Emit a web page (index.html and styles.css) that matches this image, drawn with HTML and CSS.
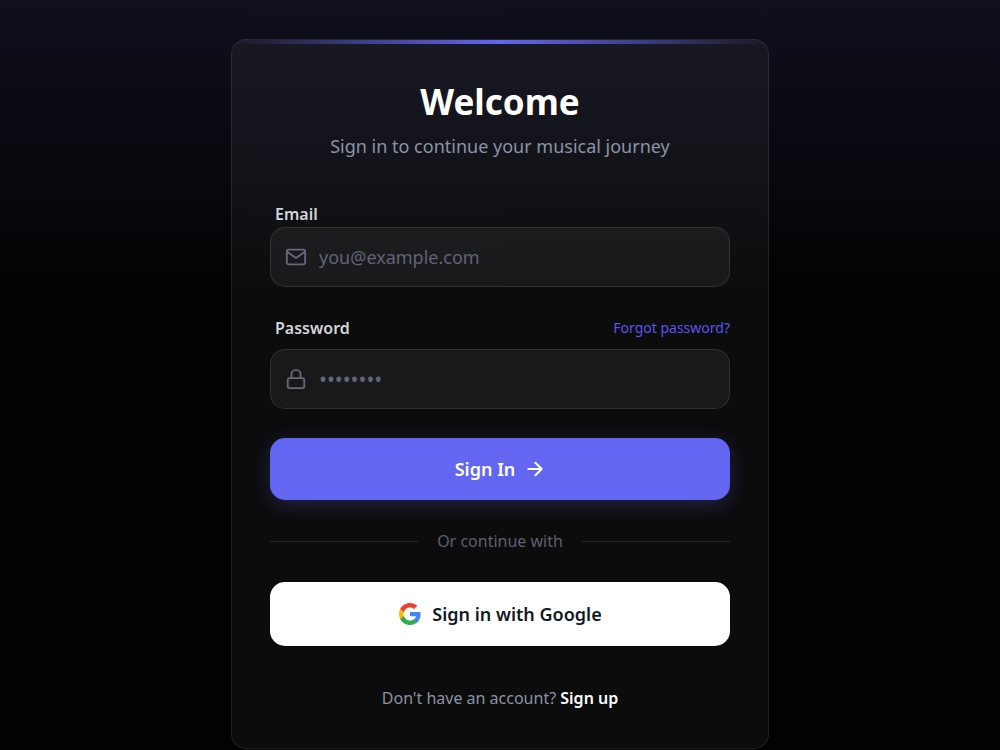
FILE: index.html
```
<!DOCTYPE html>
<html lang="en">
<head>
    <meta charset="UTF-8">
    <meta name="viewport" content="width=device-width, initial-scale=1.0">
    <title>Sign In</title>
    <link rel="stylesheet" href="styles.css">
</head>
<body>
    <main class="auth-card">
        <header class="auth-header">
            <h1>Welcome</h1>
            <p>Sign in to continue your musical journey</p>
        </header>

        <form class="auth-form">
            <div class="form-group">
                <label for="email">Email</label>
                <div class="input-wrapper">
                    <svg class="input-icon" viewBox="0 0 24 24" aria-hidden="true">
                        <rect x="2" y="4" width="20" height="16" rx="2"/>
                        <path d="M2.500 6.500 12 13l9.500-6.500"/>
                    </svg>
                    <input type="email" id="email" placeholder="you@example.com">
                </div>
            </div>

            <div class="form-group form-group-password">
                <div class="label-row">
                    <label for="password">Password</label>
                    <a href="#" class="forgot-link">Forgot password?</a>
                </div>
                <div class="input-wrapper">
                    <svg class="input-icon" viewBox="0 0 24 24" aria-hidden="true">
                        <rect x="3" y="11" width="18" height="11" rx="2"/>
                        <path d="M7 11V7a5 5 0 0 1 10 0v4"/>
                    </svg>
                    <input type="password" id="password" placeholder="••••••••">
                </div>
            </div>

            <button type="submit" class="btn btn-primary">
                <span>Sign In</span>
                <svg class="arrow-icon" viewBox="0 0 24 24" aria-hidden="true">
                    <path d="M4 12h16M12.500 4.500 20 12l-7.500 7.500"/>
                </svg>
            </button>
        </form>

        <div class="divider"><span>Or continue with</span></div>

        <button type="button" class="btn btn-google">
            <svg class="google-icon" viewBox="0 0 24 24" aria-hidden="true">
                <path fill="#4285F4" d="M22.560 12.250c0-.78-.07-1.530-.2-2.250H12v4.260h5.920c-.26 1.370-1.040 2.530-2.210 3.310v2.770h3.570c2.080-1.920 3.280-4.740 3.280-8.090z"/>
                <path fill="#34A853" d="M12 23c2.970 0 5.460-.98 7.280-2.660l-3.570-2.770c-.98.66-2.230 1.060-3.710 1.060-2.860 0-5.290-1.930-6.160-4.530H2.180v2.840C3.990 20.530 7.700 23 12 23z"/>
                <path fill="#FBBC05" d="M5.840 14.100c-.22-.66-.35-1.360-.35-2.100s.13-1.440.35-2.100V7.060H2.180C1.430 8.550 1 10.220 1 12s.43 3.450 1.180 4.940l3.660-2.840z"/>
                <path fill="#EA4335" d="M12 5.380c1.620 0 3.060.56 4.210 1.640l3.150-3.150C17.450 2.090 14.970 1 12 1 7.700 1 3.990 3.470 2.180 7.060l3.660 2.840c.87-2.600 3.300-4.520 6.160-4.520z"/>
            </svg>
            <span>Sign in with Google</span>
        </button>

        <p class="auth-footer">Don't have an account? <a href="#">Sign up</a></p>
    </main>
</body>
</html>
```
FILE: styles.css
```
* {
    box-sizing: border-box;
}

body {
    margin: 0;
    padding: 39px 20px 2px;
    min-height: 100vh;
    background: linear-gradient(180deg, #10101e 0, #020203 300px, #020202 100%);
    background-color: #020202;
    color: #ffffff;
    font-family: "Segoe UI", "Noto Sans", sans-serif;
    font-size: 16px;
    line-height: 24px;
}

h1,
p {
    margin: 0;
}

a {
    text-decoration: none;
}

.auth-card {
    position: relative;
    max-width: 538px;
    margin: 0 auto;
    padding: 38px;
    border: 1px solid rgba(255, 255, 255, 0.08);
    border-radius: 15px;
    background-color: rgba(255, 255, 255, 0.045);
    overflow: hidden;
}

/* glowing line on the top edge */
.auth-card::before {
    content: "";
    position: absolute;
    top: 0;
    left: 0;
    right: 0;
    height: 4px;
    background: linear-gradient(90deg, transparent, #6366f1, transparent);
}

.auth-header {
    margin-bottom: 42px;
    text-align: center;
}

.auth-header h1 {
    margin-bottom: 6px;
    font-size: 35px;
    line-height: 48px;
    font-weight: 700;
}

.auth-header p {
    color: #8b93a3;
    font-size: 18px;
    line-height: 28px;
}

.auth-form {
    display: flex;
    flex-direction: column;
    gap: 29px;
}

.form-group {
    display: flex;
    flex-direction: column;
    gap: 1px;
}

.form-group-password {
    gap: 9px;
}

.form-group label {
    padding-left: 5px;
    color: #d1d5db;
    font-weight: 600;
}

.label-row {
    display: flex;
    justify-content: space-between;
    align-items: center;
}

.forgot-link {
    color: #5b54ee;
    font-size: 14px;
}

.input-wrapper {
    display: flex;
    align-items: center;
    gap: 12px;
    height: 60px;
    padding: 0 14px;
    border: 1px solid rgba(255, 255, 255, 0.1);
    border-radius: 15px;
    background-color: rgba(255, 255, 255, 0.055);
}

.input-icon {
    flex: none;
    width: 22px;
    height: 22px;
    fill: none;
    stroke: #636a79;
    stroke-width: 2;
    stroke-linecap: round;
    stroke-linejoin: round;
}

.input-wrapper input {
    flex: 1;
    min-width: 0;
    padding: 0;
    border: none;
    outline: none;
    background: transparent;
    color: #ffffff;
    font-family: inherit;
    font-size: 18px;
    line-height: 28px;
}

.input-wrapper input::placeholder {
    color: #5d6575;
    opacity: 1;
}

.input-wrapper input[type="password"] {
    font-size: 21px;
}

.btn {
    display: flex;
    justify-content: center;
    align-items: center;
    gap: 10px;
    width: 100%;
    height: 64px;
    padding: 0 20px;
    border: none;
    border-radius: 15px;
    font-family: inherit;
    font-size: 18px;
    font-weight: 600;
    line-height: 28px;
    cursor: pointer;
}

.btn-primary {
    height: 62px;
    background-color: #6366f1;
    color: #ffffff;
    box-shadow: 0 5px 20px rgba(99, 102, 241, 0.25);
}

.arrow-icon {
    width: 20px;
    height: 20px;
    fill: none;
    stroke: #ffffff;
    stroke-width: 2.5;
    stroke-linecap: round;
    stroke-linejoin: round;
}

.btn-google {
    background-color: #ffffff;
    color: #111827;
}

.google-icon {
    width: 24px;
    height: 24px;
}

.divider {
    display: flex;
    align-items: center;
    gap: 19px;
    margin: 29px 0;
    color: #5b616e;
}

.divider::before,
.divider::after {
    content: "";
    flex: 1;
    height: 1px;
    background-color: rgba(255, 255, 255, 0.1);
}

.auth-footer {
    margin-top: 40px;
    color: #8b93a3;
    text-align: center;
}

.auth-footer a {
    color: #ffffff;
    font-weight: 600;
}
```
